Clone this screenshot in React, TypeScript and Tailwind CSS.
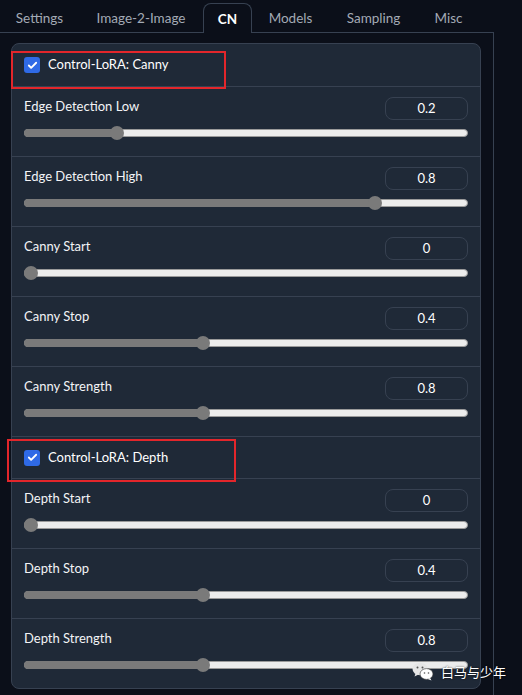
import { Check } from 'lucide-react';

type Item =
  | { kind: 'check'; label: string; box: string }
  | { kind: 'slider'; label: string; value: number; max: number };

const items: Item[] = [
  { kind: 'check', label: 'Control-LoRA: Canny', box: 'left-[-1px] top-[7px] w-[215px] h-[38px]' },
  { kind: 'slider', label: 'Edge Detection Low', value: 0.2, max: 1 },
  { kind: 'slider', label: 'Edge Detection High', value: 0.8, max: 1 },
  { kind: 'slider', label: 'Canny Start', value: 0, max: 1 },
  { kind: 'slider', label: 'Canny Stop', value: 0.4, max: 1 },
  { kind: 'slider', label: 'Canny Strength', value: 0.8, max: 2 },
  { kind: 'check', label: 'Control-LoRA: Depth', box: 'left-[-5px] top-[2px] w-[229px] h-[43px]' },
  { kind: 'slider', label: 'Depth Start', value: 0, max: 1 },
  { kind: 'slider', label: 'Depth Stop', value: 0.4, max: 1 },
  { kind: 'slider', label: 'Depth Strength', value: 0.8, max: 2 },
];

const tabs = [
  { name: 'Settings', w: 'w-[79px]' },
  { name: 'Image-2-Image', w: 'w-[124px]' },
  { name: 'CN', w: 'w-[49px]' },
  { name: 'Models', w: 'w-[77px]' },
  { name: 'Sampling', w: 'w-[89px]' },
  { name: 'Misc', w: 'w-[61px]' },
];

function Slider({ value, max }: { value: number; max: number }) {
  const pct = value / max;
  return (
    <div className="relative h-[8px] mt-[9px]">
      <div className="absolute inset-0 rounded-full bg-[#ececec] border border-[#9a9a9a]" />
      <div
        className="absolute left-0 top-0 h-[8px] rounded-full bg-[#7a7a7a]"
        style={{ width: `calc(7px + (100% - 14px) * ${pct})` }}
      />
      <div
        className="absolute top-[-3px] w-[14px] h-[14px] rounded-full bg-[#7a7a7a]"
        style={{ left: `calc((100% - 14px) * ${pct})` }}
      />
    </div>
  );
}

export default function App() {
  return (
    <div className="relative w-[522px] h-[695px] overflow-hidden bg-[#0b0f19] font-['Lato',sans-serif] text-[13px]">
      {/* Tab bar */}
      <div className="flex h-[33px] pt-[3px] text-[13.5px]">
        {tabs.map((t) =>
          t.name === 'CN' ? (
            <div
              key={t.name}
              className={`${t.w} h-[30px] pt-[2px] flex items-center justify-center rounded-t-lg border border-b-0 border-[#374151] bg-[#0b0f19] text-white font-bold relative z-10`}
            >
              {t.name}
            </div>
          ) : (
            <div
              key={t.name}
              className={`${t.w} h-[30px] pt-[2px] flex items-center justify-center text-[#a3aab5] border-b border-[#374151]`}
            >
              {t.name}
            </div>
          )
        )}
        <div className="w-[14px] h-[30px] border-b border-[#374151]" />
      </div>

      {/* Panel */}
      <div className="w-[494px] border-r border-[#374151] -mt-px border-t pt-[10px] pl-[11px] pr-[12px] h-[700px]">
        <div className="w-[470px] rounded-lg border border-[#374151] bg-[#1f2937]">
          {items.map((it, i) =>
            it.kind === 'check' ? (
              <div
                key={it.label}
                className={`relative flex items-center gap-2 px-[12px] h-[42px] ${i > 0 ? 'border-t border-[#374151]' : ''}`}
              >
                <span className="w-[16px] h-[16px] rounded-[3px] bg-[#2f6ae6] flex items-center justify-center">
                  <Check className="w-[11px] h-[11px] text-white" strokeWidth={4} />
                </span>
                <span className="text-white">{it.label}</span>
                <div className={`absolute border-2 border-[#e3262b] ${it.box}`} />
              </div>
            ) : (
              <div key={it.label} className="border-t border-[#374151] px-[12px] pt-[10px] pb-[19px]">
                <div className="flex justify-between h-[23px]">
                  <span className="leading-[18px] text-[#f3f4f6]">{it.label}</span>
                  <div className="w-[83px] h-[23px] rounded-lg border border-[#374151] flex items-center justify-center text-white text-[13px]">
                    {it.value}
                  </div>
                </div>
                <Slider value={it.value} max={it.max} />
              </div>
            )
          )}
        </div>
      </div>

      {/* Watermark */}
      <div className="absolute left-[412px] top-[662px] flex items-center gap-[7px] text-white [text-shadow:0_0_2px_rgba(0,0,0,0.8)]">
        <svg width="22" height="19" viewBox="0 0 22 19">
          <ellipse cx="8" cy="7" rx="7.5" ry="6.2" fill="#e6e6e6" />
          <path d="M3.5 11.5 L2.5 14.5 L6.5 12.6 Z" fill="#e6e6e6" />
          <ellipse cx="14.5" cy="12" rx="6.5" ry="5.4" fill="#ffffff" stroke="#333" strokeWidth="0.6" />
          <path d="M18 16 L19.5 18.5 L15.8 17 Z" fill="#ffffff" />
          <circle cx="5.5" cy="5.5" r="1" fill="#555" />
          <circle cx="10.5" cy="5.5" r="1" fill="#555" />
          <circle cx="12.5" cy="11" r="0.8" fill="#555" />
          <circle cx="16.5" cy="11" r="0.8" fill="#555" />
        </svg>
        <span className="font-['Noto_Sans_CJK_SC',sans-serif] text-[13px] leading-none">白马与少年</span>
      </div>
    </div>
  );
}
